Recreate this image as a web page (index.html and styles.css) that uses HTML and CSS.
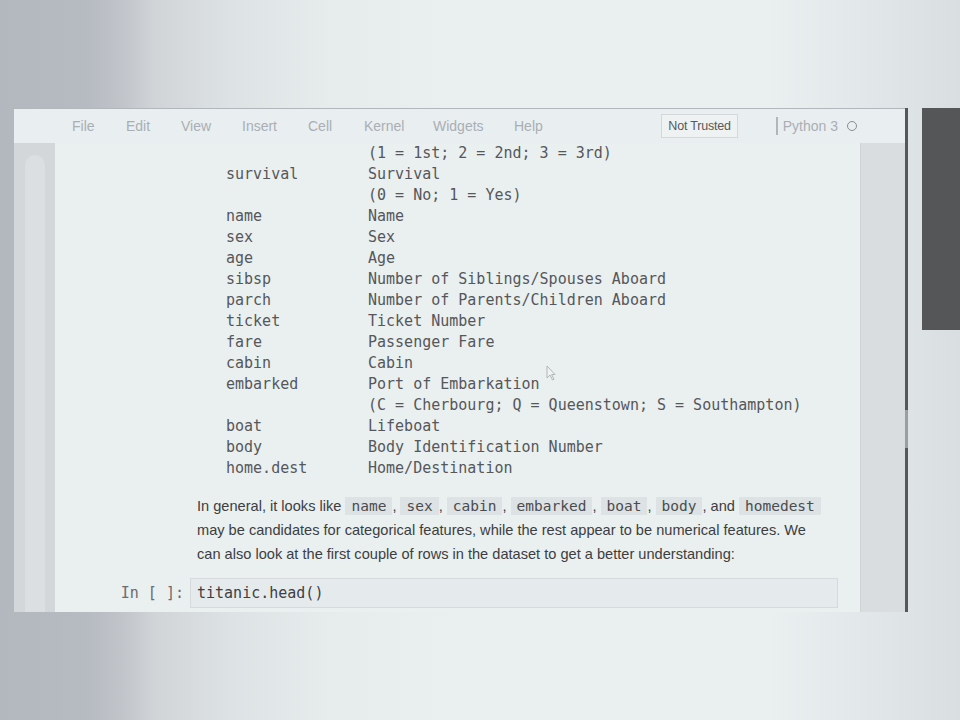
FILE: index.html
```html
<!DOCTYPE html>
<html>
<head>
<meta charset="utf-8">
<link rel="stylesheet" href="styles.css">
</head>
<body>
<div class="stage">
  <div class="window">
    <div class="menubar">
      <nav class="menus">
        <span>File</span><span>Edit</span><span>View</span><span>Insert</span><span>Cell</span><span>Kernel</span><span>Widgets</span><span>Help</span>
      </nav>
      <div class="kernel-area">
        <span class="trust">Not Trusted</span>
        <span class="sep"></span>
        <span class="kname">Python 3</span>
        <span class="kstate"></span>
      </div>
    </div>
    <div class="main">
      <div class="side left"><div class="inner"></div></div>
      <div class="content">
        <div class="cell md">
          <div class="prompt"></div>
          <div class="body">
            <div class="vars">
              <span></span><span>(1 = 1st; 2 = 2nd; 3 = 3rd)</span>
              <span>survival</span><span>Survival</span>
              <span></span><span>(0 = No; 1 = Yes)</span>
              <span>name</span><span>Name</span>
              <span>sex</span><span>Sex</span>
              <span>age</span><span>Age</span>
              <span>sibsp</span><span>Number of Siblings/Spouses Aboard</span>
              <span>parch</span><span>Number of Parents/Children Aboard</span>
              <span>ticket</span><span>Ticket Number</span>
              <span>fare</span><span>Passenger Fare</span>
              <span>cabin</span><span>Cabin</span>
              <span>embarked</span><span>Port of Embarkation</span>
              <span></span><span>(C = Cherbourg; Q = Queenstown; S = Southampton)</span>
              <span>boat</span><span>Lifeboat</span>
              <span>body</span><span>Body Identification Number</span>
              <span>home.dest</span><span>Home/Destination</span>
            </div>
            <p class="text">In general, it looks like <code>name</code>, <code>sex</code>, <code>cabin</code>, <code>embarked</code>, <code>boat</code>, <code>body</code>, and <code>homedest</code> may be candidates for categorical features, while the rest appear to be numerical features. We can also look at the first couple of rows in the dataset to get a better understanding:</p>
          </div>
        </div>
        <div class="cell code">
          <div class="prompt">In [ ]:</div>
          <div class="input">titanic.head()</div>
        </div>
        <svg class="cursor" width="10" height="16" viewBox="0 0 10 16"><path d="M1 1 L1 13 L4 10 L6.5 15 L8 14.3 L5.6 9.5 L9 9.5 Z" fill="#f4f6f7" stroke="#9a9ea2" stroke-width="1"/></svg>
      </div>
      <div class="side right"></div>
    </div>
  </div>
  <div class="track"><div class="thumb"></div></div>
  <div class="dark-panel"></div>
</div>
</body>
</html>
```

FILE: styles.css
```css
html, body {
  margin: 0;
  padding: 0;
}
body {
  width: 960px;
  height: 720px;
  overflow: hidden;
  background: linear-gradient(90deg, #b3b7be 0%, #b6bac1 9%, #c2c6cb 13%, #d0d4d7 16%, #dde2e4 24%, #e6ebec 34%, #eaeff0 48%, #eaeff0 80%, #e2e7e9 90%, #d9dee1 100%);
  font-family: "Liberation Sans", Arial, sans-serif;
}
.stage {
  display: flex;
  align-items: flex-start;
  padding: 108px 0 0 14px;
}
.window {
  width: 891px;
  height: 503px;
  border-top: 1px solid #b2b7bc;
  display: flex;
  flex-direction: column;
  overflow: hidden;
}
.track {
  width: 3px;
  height: 504px;
  background: #555759;
  flex: none;
}
.thumb {
  margin-top: 302px;
  height: 38px;
  background: #9b9ea1;
}
.menubar {
  height: 34px;
  flex: none;
  background: #e9eef0;
  display: flex;
  align-items: center;
  justify-content: space-between;
  padding-left: 58px;
  padding-right: 52px;
  box-sizing: border-box;
}
.menus {
  display: flex;
  font-size: 14px;
  color: #a9aeb4;
}
.menus span:nth-child(1) { width: 54px; }
.menus span:nth-child(2) { width: 55px; }
.menus span:nth-child(3) { width: 61px; }
.menus span:nth-child(4) { width: 66px; }
.menus span:nth-child(5) { width: 56px; }
.menus span:nth-child(6) { width: 69px; }
.menus span:nth-child(7) { width: 81px; }
.kernel-area {
  display: flex;
  align-items: center;
}
.trust {
  font-size: 12.5px;
  color: #58595b;
  border: 1px solid #d4d8da;
  background: #eef2f3;
  padding: 4px 6px;
  letter-spacing: -0.2px;
}
.sep {
  width: 2px;
  height: 18px;
  background: #b3b6b9;
  margin-left: 38px;
  margin-right: 5px;
}
.kname {
  font-size: 14px;
  color: #a9aeb4;
}
.kstate {
  width: 8px;
  height: 8px;
  border: 1.5px solid #8a8d90;
  border-radius: 50%;
  margin-left: 9px;
  margin-right: -4px;
}
.main {
  flex: 1;
  display: flex;
  min-height: 0;
}
.side {
  flex: none;
  background: #d3d7da;
}
.side.left {
  width: 41px;
  display: flex;
  justify-content: center;
}
.side.left .inner {
  width: 20px;
  margin-top: 12px;
  background: #dcdfe1;
  border-radius: 10px 10px 0 0;
}
.side.right {
  width: 45px;
  background: #d9dde0;
  border-left: 1px solid #d0d4d7;
  box-sizing: border-box;
}
.content {
  flex: 1;
  background: #eaeff0;
  overflow: hidden;
  position: relative;
}
.cell {
  display: flex;
  margin-right: 22px;
}
.prompt {
  width: 135px;
  flex: none;
  box-sizing: border-box;
  text-align: right;
  padding-right: 6px;
  font-family: "DejaVu Sans Mono", monospace;
  font-size: 15px;
  color: #6a6c6e;
}
.body {
  flex: 1;
  padding-left: 7px;
}
.vars {
  display: grid;
  grid-template-columns: 142px auto;
  padding-left: 29px;
  font-family: "DejaVu Sans Mono", monospace;
  font-size: 15px;
  line-height: 21px;
  color: #55575a;
  white-space: pre;
}
.text {
  margin: 15px 0 0 0;
  font-size: 14.6px;
  line-height: 24px;
  color: #3c3e40;
  width: 636px;
}
.text code {
  font-family: "DejaVu Sans Mono", monospace;
  font-size: 14.5px;
  color: #4a4c4e;
  background: #dde2e4;
  padding: 1px 6px;
}
.cell.code {
  margin-top: 12px;
  align-items: center;
}
.cell.code .prompt {
  line-height: 30px;
}
.input {
  flex: 1;
  height: 30px;
  box-sizing: border-box;
  border: 1px solid #d6dadc;
  background: #e5eaec;
  padding: 0 6px;
  line-height: 28px;
  font-family: "DejaVu Sans Mono", monospace;
  font-size: 15px;
  color: #3e4042;
}
.cursor {
  position: absolute;
  left: 491px;
  top: 222px;
  opacity: 0.7;
}
.dark-panel {
  width: 38px;
  height: 222px;
  margin-left: 14px;
  background: #555657;
  flex: none;
}
```
